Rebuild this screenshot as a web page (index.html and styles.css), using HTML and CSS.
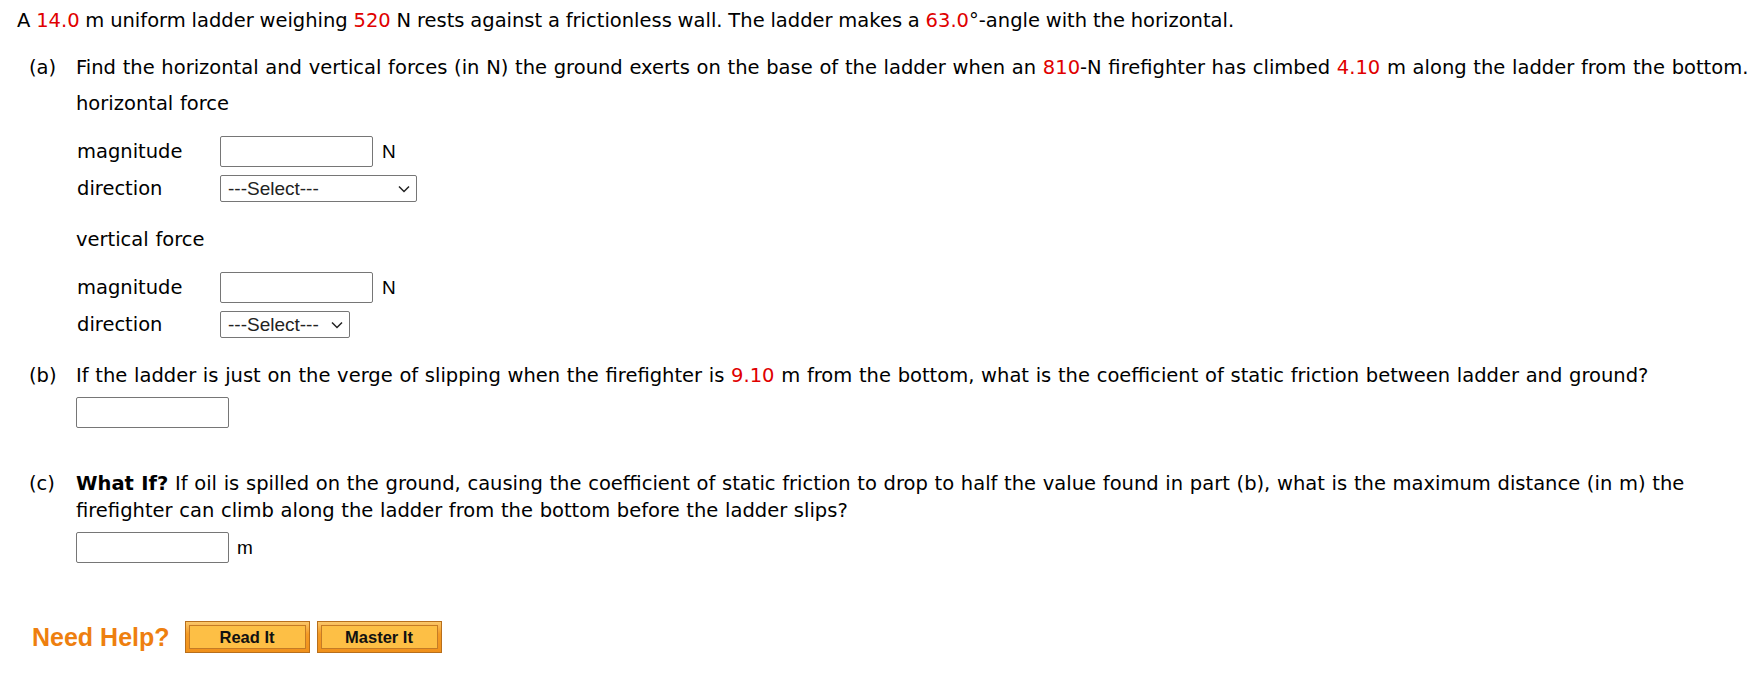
FILE: index.html
```html
<!DOCTYPE html>
<html>
<head>
<meta charset="utf-8">
<link rel="stylesheet" href="styles.css">
</head>
<body>
<div class="page">
  <p class="intro">A <span class="hl">14.0</span> m uniform ladder weighing <span class="hl">520</span> N rests against a frictionless wall. The ladder makes a <span class="hl">63.0</span>°-angle with the horizontal.</p>

  <div class="part part-a">
    <div class="plabel">(a)</div>
    <div class="pbody">
      <div class="ptext">Find the horizontal and vertical forces (in N) the ground exerts on the base of the ladder when an <span class="hl">810</span>-N firefighter has climbed <span class="hl">4.10</span> m along the ladder from the bottom.</div>
      <div class="subhead">horizontal force</div>
      <div class="fields">
        <div class="flabel">magnitude</div>
        <div class="fval"><input class="ans" type="text"><span class="unit">N</span></div>
        <div class="flabel">direction</div>
        <div class="fval"><span class="selwrap"><select class="sel sel-wide"><option>---Select---</option></select><svg class="chev" width="12" height="8" viewBox="0 0 12 8"><path d="M1 1.5 L6 6.5 L11 1.5" fill="none" stroke="#222" stroke-width="1.5"/></svg></span></div>
      </div>
      <div class="subhead sub2">vertical force</div>
      <div class="fields">
        <div class="flabel">magnitude</div>
        <div class="fval"><input class="ans" type="text"><span class="unit">N</span></div>
        <div class="flabel">direction</div>
        <div class="fval"><span class="selwrap"><select class="sel sel-narrow"><option>---Select---</option></select><svg class="chev" width="12" height="8" viewBox="0 0 12 8"><path d="M1 1.5 L6 6.5 L11 1.5" fill="none" stroke="#222" stroke-width="1.5"/></svg></span></div>
      </div>
    </div>
  </div>

  <div class="part part-b">
    <div class="plabel">(b)</div>
    <div class="pbody">
      <div class="ptext">If the ladder is just on the verge of slipping when the firefighter is <span class="hl">9.10</span> m from the bottom, what is the coefficient of static friction between ladder and ground?</div>
      <div class="ansrow"><input class="ans" type="text"></div>
    </div>
  </div>

  <div class="part part-c">
    <div class="plabel">(c)</div>
    <div class="pbody">
      <div class="ptext"><b>What If?</b> If oil is spilled on the ground, causing the coefficient of static friction to drop to half the value found in part (b), what is the maximum distance (in m) the firefighter can climb along the ladder from the bottom before the ladder slips?</div>
      <div class="ansrow"><input class="ans" type="text"><span class="unit unit-m">m</span></div>
    </div>
  </div>

  <div class="help">
    <span class="need">Need Help?</span>
    <span class="btn"><span class="btn-in">Read It</span></span>
    <span class="btn btn-master"><span class="btn-in">Master It</span></span>
  </div>
</div>
</body>
</html>
```

FILE: styles.css
```css
html, body {
  margin: 0;
  padding: 0;
  background: #ffffff;
}

.page {
  padding: 7px 4px 0 17px;
  font-family: "DejaVu Sans", Verdana, sans-serif;
  font-size: 19.5px;
  line-height: 27px;
  word-spacing: 0.5px;
  color: #000000;
}

.intro {
  margin: 0;
  word-spacing: -0.4px;
}

.hl {
  color: #e00000;
}

.part {
  display: grid;
  grid-template-columns: 47px 1fr;
  padding-left: 12px;
}

.part-a {
  margin-top: 20px;
}

.part-b {
  margin-top: 24px;
}

.part-c {
  margin-top: 42px;
}

.plabel {
  white-space: nowrap;
}

.subhead {
  margin-top: 9px;
}

.sub2 {
  margin-top: 24px;
}

.fields {
  display: grid;
  grid-template-columns: 143px auto;
  row-gap: 8px;
  margin-top: 19px;
  padding-left: 1px;
  align-items: center;
}

.flabel {
  line-height: 24px;
  word-spacing: 0;
}

.fval {
  display: flex;
  align-items: center;
}

.ans {
  box-sizing: border-box;
  width: 153px;
  height: 31px;
  margin: 0;
  border: 1px solid #767676;
  border-radius: 2px;
  background: #fff;
}

.unit {
  margin-left: 9px;
  font-family: "Liberation Sans", Arial, sans-serif;
  font-size: 19px;
}

.unit-m {
  margin-left: 8px;
}

.selwrap {
  position: relative;
  display: inline-flex;
}

.sel {
  box-sizing: border-box;
  height: 27px;
  margin: 0;
  padding: 0 0 0 7px;
  font-family: "Liberation Sans", Arial, sans-serif;
  font-size: 19px;
  color: #222;
  border: 1px solid #767676;
  border-radius: 2px;
  background: #fff;
  appearance: none;
  -webkit-appearance: none;
}

.chev {
  position: absolute;
  right: 7px;
  top: 10px;
  pointer-events: none;
}

.sel-wide {
  width: 197px;
}

.sel-narrow {
  width: 130px;
}

.ansrow {
  display: flex;
  align-items: center;
  margin-top: 8px;
}

.part-c .ansrow {
  margin-top: 8px;
}

.help {
  display: flex;
  align-items: center;
  margin-top: 58px;
  padding-left: 15px;
  word-spacing: 0;
}

.need {
  font-family: "Liberation Sans", Arial, sans-serif;
  font-weight: bold;
  font-size: 25px;
  color: #ee7f0f;
  margin-right: 15px;
}

.btn {
  box-sizing: border-box;
  display: inline-flex;
  width: 125px;
  height: 32px;
  padding: 3px;
  border: 1px solid #b86f1c;
  background: linear-gradient(#fbc76a, #f49b25 40%, #f0911b);
  margin-right: 7px;
}

.btn-in {
  flex: 1;
  display: flex;
  align-items: center;
  justify-content: center;
  border: 1px solid #c57b25;
  background: #fdbf45;
  font-family: "Liberation Sans", Arial, sans-serif;
  font-weight: bold;
  font-size: 16.5px;
  color: #111;
}
```
